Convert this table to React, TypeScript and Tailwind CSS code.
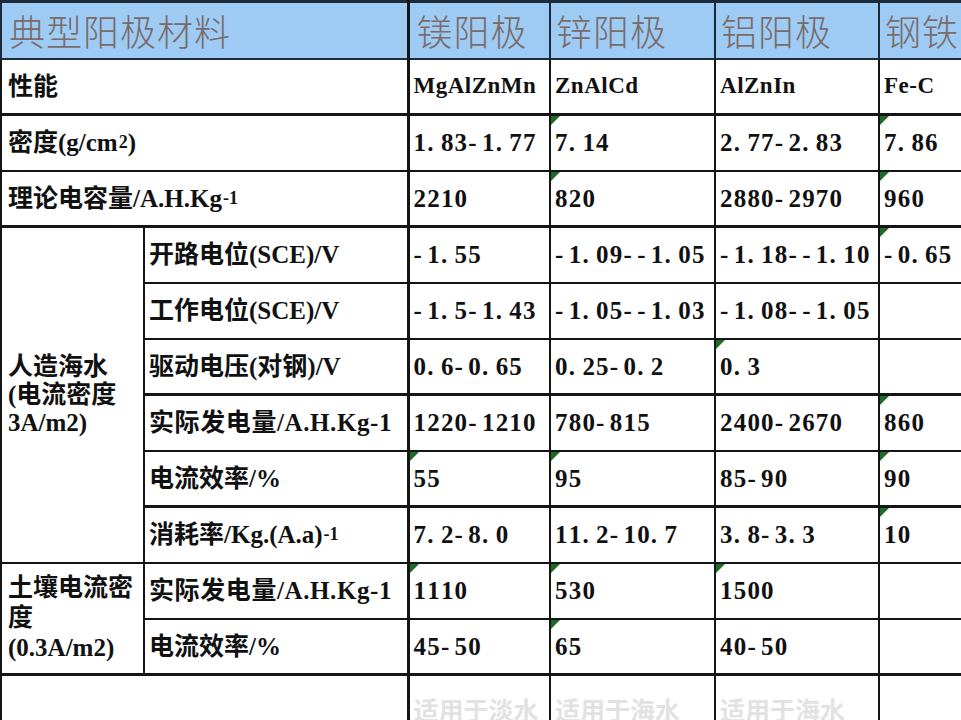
import type { ReactNode } from "react"

const cellFont = "font-['Liberation_Serif','Noto_Sans_CJK_SC',serif] font-bold text-[25px] text-[#111]"

function Flag() {
  return (
    <span className="absolute left-0 top-0 h-0 w-0 border-t-[9px] border-r-[9px] border-t-[#1d6b26] border-r-transparent" />
  )
}

function Td({
  children,
  flag,
  thick,
  colSpan,
  rowSpan,
  className = "",
}: {
  children?: ReactNode
  flag?: boolean
  thick?: boolean
  colSpan?: number
  rowSpan?: number
  className?: string
}) {
  return (
    <td
      colSpan={colSpan}
      rowSpan={rowSpan}
      className={`relative border-2 border-[#151515] px-[4px] align-middle whitespace-nowrap ${thick ? "border-t-[3px]" : ""} ${className}`}
    >
      {flag && <Flag />}
      {children}
    </td>
  )
}

const Sup = ({ children }: { children: ReactNode }) => (
  <sup className="relative -top-[3px] ml-[1px] text-[18px]">{children}</sup>
)

// half-width cells, like the spreadsheet's Song font
function Mono({ text }: { text: string }) {
  return (
    <>
      {text.split("").map((ch, i) => (
        <span key={i} className="inline-block w-[13.7px]">
          {ch}
        </span>
      ))}
    </>
  )
}

type Val = { t: string; f?: boolean }

function Vals({ vals, thick }: { vals: Val[]; thick?: boolean }) {
  return (
    <>
      {vals.map((v, i) => (
        <Td key={i} flag={v.f} thick={thick}>
          <Mono text={v.t} />
        </Td>
      ))}
    </>
  )
}

export default function App() {
  return (
    <div className="h-[720px] w-[961px] overflow-hidden bg-white">
      <table className={`w-[998px] table-fixed border-collapse ${cellFont}`}>
        <colgroup>
          <col className="w-[143px]" />
          <col className="w-[264px]" />
          <col className="w-[142px]" />
          <col className="w-[165px]" />
          <col className="w-[164px]" />
          <col className="w-[120px]" />
        </colgroup>
        <tbody>
          <tr className="h-[57px] bg-[#9dcbf4] font-['Noto_Sans_CJK_SC',sans-serif] text-[36px] font-light tracking-[1px] text-[#7a6a6a]">
            <td colSpan={2} className="border-2 border-t-[3px] border-[#1c2a3a] border-r-[3px] border-r-[#151515] pl-[7px] align-middle">
              典型阳极材料
            </td>
            <td className="border-2 border-t-[3px] border-[#1c2a3a] pl-[7px] align-middle">镁阳极</td>
            <td className="border-2 border-t-[3px] border-[#1c2a3a] pl-[5px] align-middle">锌阳极</td>
            <td className="border-2 border-t-[3px] border-[#1c2a3a] pl-[5px] align-middle">铝阳极</td>
            <td className="border-2 border-t-[3px] border-[#1c2a3a] pl-[5px] align-middle whitespace-nowrap">钢铁</td>
          </tr>

          <tr className="h-[56px] text-[23px]">
            <Td colSpan={2} className="border-r-[3px] pl-[6px] text-[25px]">性能</Td>
            <Td className="tracking-[0.5px]">MgAlZnMn</Td>
            <Td className="tracking-[0.5px]">ZnAlCd</Td>
            <Td className="tracking-[0.5px]">AlZnIn</Td>
            <Td className="tracking-[0.5px]">Fe-C</Td>
          </tr>
          <tr className="h-[56px]">
            <Td colSpan={2} thick className="border-r-[3px] pl-[6px]">
              密度(g/cm<Sup>2</Sup>)
            </Td>
            <Vals thick vals={[{ t: "1.83-1.77" }, { t: "7.14", f: true }, { t: "2.77-2.83" }, { t: "7.86", f: true }]} />
          </tr>
          <tr className="h-[56px]">
            <Td colSpan={2} className="border-r-[3px] pl-[6px]">
              理论电容量/A.H.Kg<Sup>-1</Sup>
            </Td>
            <Vals vals={[{ t: "2210" }, { t: "820", f: true }, { t: "2880-2970" }, { t: "960", f: true }]} />
          </tr>

          <tr className="h-[56px]">
            <Td rowSpan={6} thick className="whitespace-normal pl-[6px] leading-[28px]">
              人造海水
              <br />
              (电流密度
              <br />
              3A/m2)
            </Td>
            <Td thick className="border-r-[3px]">开路电位(SCE)/V</Td>
            <Vals thick vals={[{ t: "-1.55" }, { t: "-1.09--1.05" }, { t: "-1.18--1.10" }, { t: "-0.65", f: true }]} />
          </tr>
          <tr className="h-[56px]">
            <Td className="border-r-[3px]">工作电位(SCE)/V</Td>
            <Vals vals={[{ t: "-1.5-1.43" }, { t: "-1.05--1.03" }, { t: "-1.08--1.05" }, { t: "" }]} />
          </tr>
          <tr className="h-[56px]">
            <Td className="border-r-[3px]">驱动电压(对钢)/V</Td>
            <Vals vals={[{ t: "0.6-0.65" }, { t: "0.25-0.2" }, { t: "0.3", f: true }, { t: "" }]} />
          </tr>
          <tr className="h-[56px]">
            <Td thick className="border-r-[3px] tracking-[0.6px]">实际发电量/A.H.Kg-1</Td>
            <Vals thick vals={[{ t: "1220-1210" }, { t: "780-815" }, { t: "2400-2670" }, { t: "860", f: true }]} />
          </tr>
          <tr className="h-[56px]">
            <Td className="border-r-[3px]">电流效率/%</Td>
            <Vals vals={[{ t: "55", f: true }, { t: "95", f: true }, { t: "85-90" }, { t: "90", f: true }]} />
          </tr>
          <tr className="h-[56px]">
            <Td thick className="border-r-[3px]">
              消耗率/Kg.(A.a)<Sup>-1</Sup>
            </Td>
            <Vals thick vals={[{ t: "7.2-8.0" }, { t: "11.2-10.7" }, { t: "3.8-3.3" }, { t: "10", f: true }]} />
          </tr>

          <tr className="h-[56px]">
            <Td rowSpan={2} className="whitespace-normal pl-[6px] leading-[30px]">
              土壤电流密
              <br />
              度
              <br />
              (0.3A/m2)
            </Td>
            <Td className="border-r-[3px] tracking-[0.6px]">实际发电量/A.H.Kg-1</Td>
            <Vals vals={[{ t: "1110", f: true }, { t: "530", f: true }, { t: "1500", f: true }, { t: "" }]} />
          </tr>
          <tr className="h-[56px]">
            <Td className="border-r-[3px]">电流效率/%</Td>
            <Vals vals={[{ t: "45-50" }, { t: "65", f: true }, { t: "40-50" }, { t: "" }]} />
          </tr>

          <tr className="h-[74px]">
            <Td colSpan={2} thick className="border-r-[3px]" />
            <Td thick className="align-bottom text-[#e2e2e2]">适用于淡水</Td>
            <Td thick className="align-bottom text-[#e2e2e2]">适用于海水</Td>
            <Td thick className="align-bottom text-[#e2e2e2]">适用于海水</Td>
            <Td thick />
          </tr>
        </tbody>
      </table>
    </div>
  )
}
